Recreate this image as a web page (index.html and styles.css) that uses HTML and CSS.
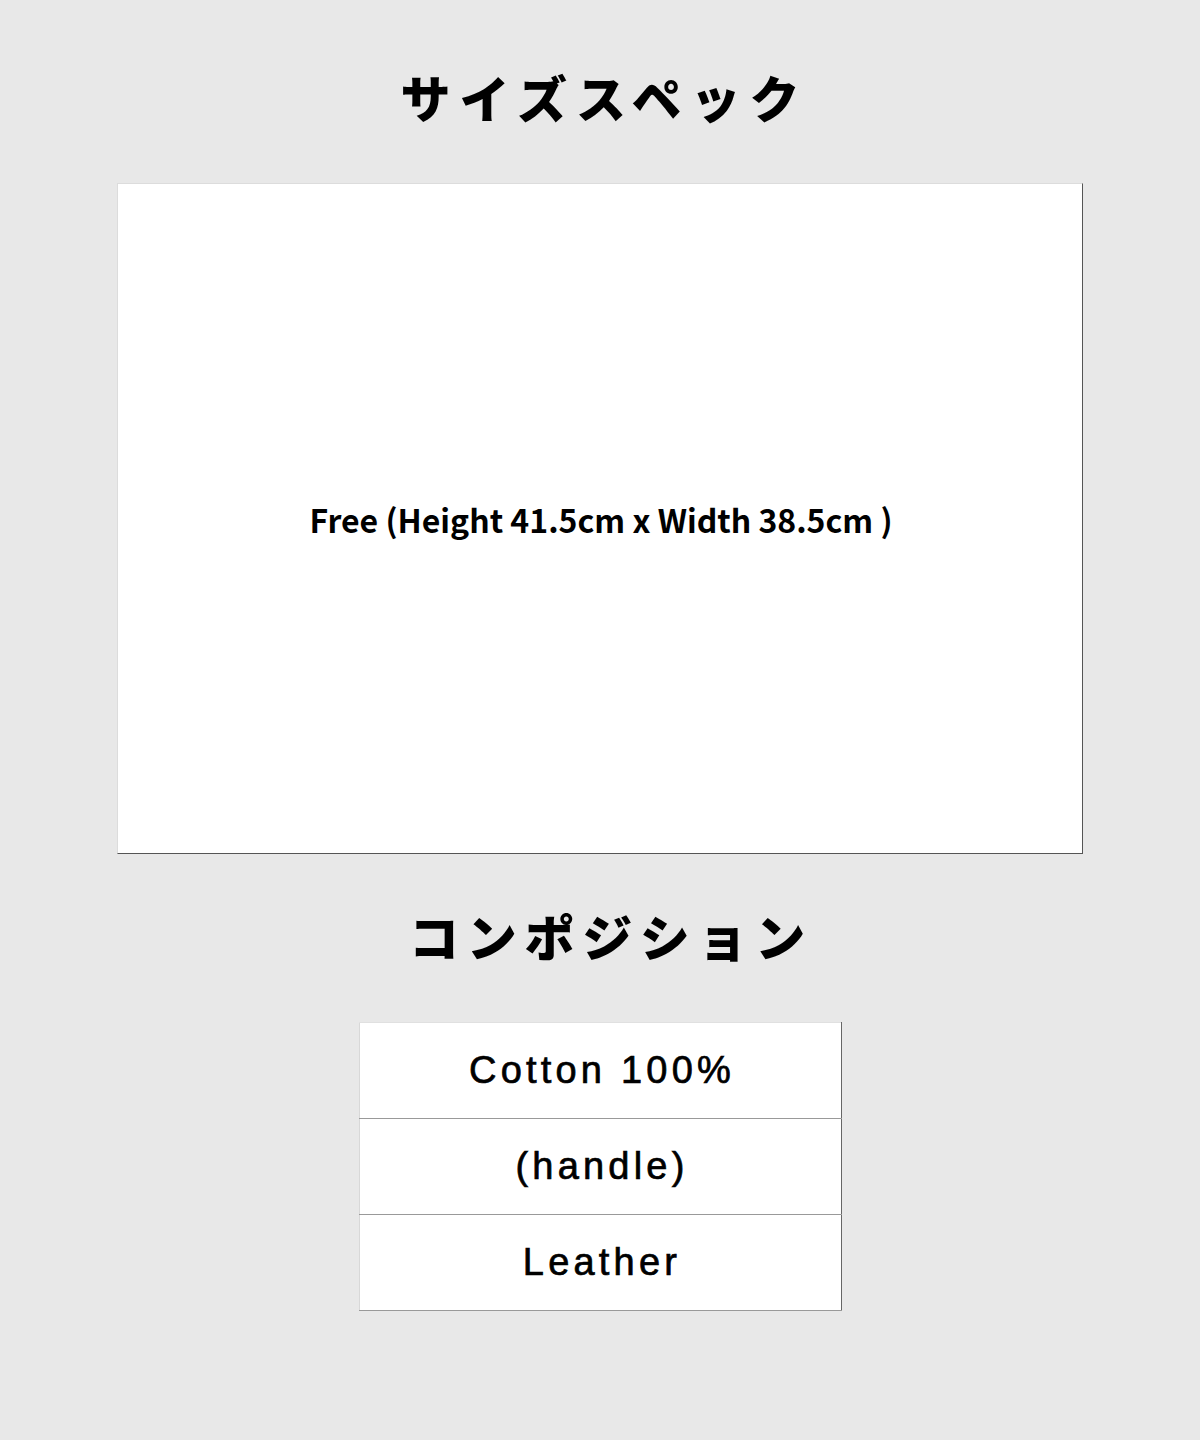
FILE: index.html
```html
<!DOCTYPE html>
<html lang="ja">
<head>
<meta charset="utf-8">
<link rel="stylesheet" href="styles.css">
</head>
<body>
<main class="page">
  <h2 class="title title-size">サイズスペック</h2>
  <section class="size-box">
    <p class="size-text">Free (Height 41.5cm x Width 38.5cm )</p>
  </section>
  <h2 class="title title-comp">コンポジション</h2>
  <table class="comp">
    <tr><td>Cotton 100%</td></tr>
    <tr><td>(handle)</td></tr>
    <tr><td>Leather</td></tr>
  </table>
</main>
</body>
</html>
```
FILE: styles.css
```css
html, body {
  margin: 0;
  padding: 0;
  background: #e8e8e8;
}
.page {
  width: 1200px;
  height: 1440px;
  display: flex;
  flex-direction: column;
  align-items: center;
  font-family: "Noto Sans CJK JP", "Liberation Sans", sans-serif;
  color: #000;
}
.title {
  margin: 0;
  font-size: 50px;
  font-weight: 900;
  letter-spacing: 9px;
  line-height: 60px;
  padding-left: 9px;
}
.title-size {
  margin-top: 66px;
}
.size-box {
  margin-top: 57px;
  width: 964px;
  height: 669px;
  background: #fff;
  border-top: 1px solid #dcdcdc;
  border-left: 1px solid #dcdcdc;
  border-right: 1px solid #555;
  border-bottom: 1px solid #555;
  display: flex;
  align-items: center;
  justify-content: center;
}
.size-text {
  margin: 0;
  font-family: "Noto Sans CJK JP", sans-serif;
  font-weight: 700;
  font-size: 32px;
  transform: translateX(1px);
}
.title-comp {
  margin-top: 51px;
  letter-spacing: 7.7px;
  padding-left: 22px;
}
.comp {
  margin-top: 57px;
  width: 483px;
  border-collapse: collapse;
  background: #fff;
  border-top: 1px solid #e0e0e0;
  border-left: 1px solid #d8d8d8;
  border-right: 1px solid #666;
  border-bottom: 1px solid #666;
}
.comp td {
  height: 95px;
  padding: 0 0 0 4px;
  text-align: center;
  vertical-align: middle;
  font-family: "Liberation Sans", Arial, sans-serif;
  font-size: 38px;
  letter-spacing: 4.2px;
  border-bottom: 1px solid #999;
  -webkit-text-stroke: 0.7px #000;
}
```
